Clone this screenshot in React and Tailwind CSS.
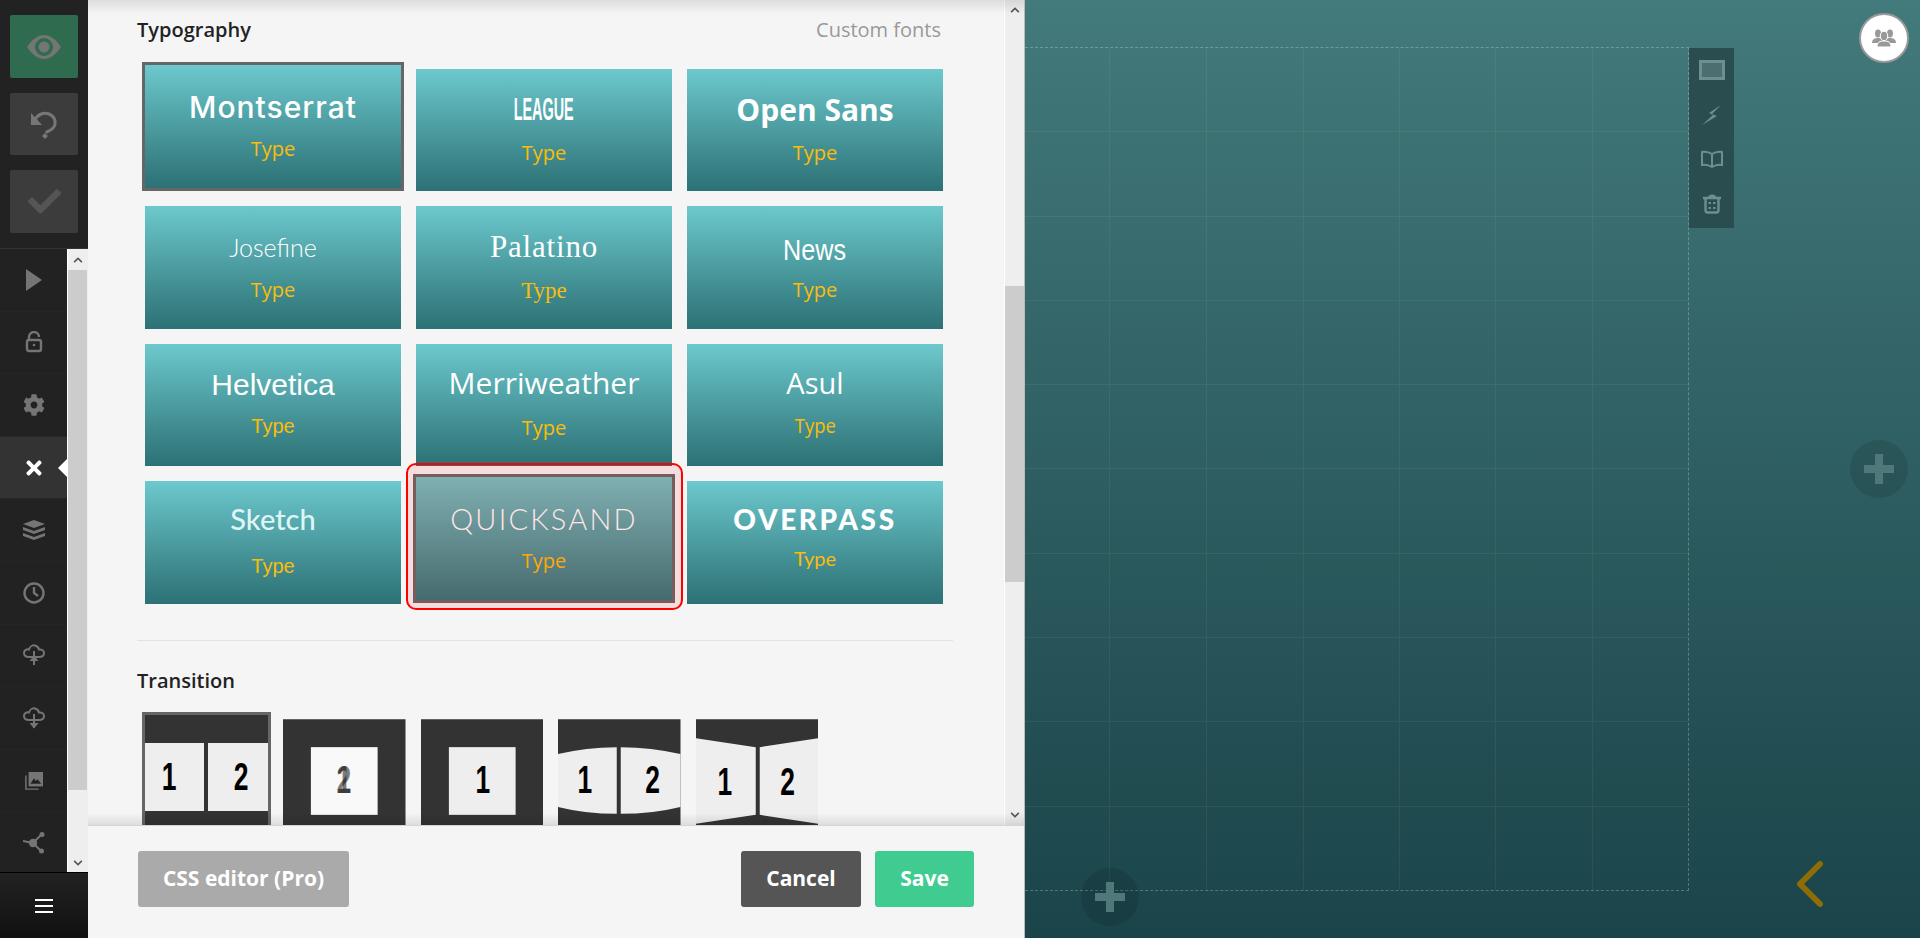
import React from "react";
import { FaCheck, FaCog, FaTimes, FaChevronUp, FaChevronDown } from "react-icons/fa";

const cards = [
  { name: "Montserrat", selected: true, pt: "pt-[24px]", mt: "mt-[10px]", nameClass: "font-['Inter'] font-medium text-[30px] tracking-[1px]", typeClass: "font-['Open_Sans'] text-[20px]" },
  { name: "LEAGUE", pt: "pt-[22px]", mt: "mt-[12px]", nameClass: "font-['Liberation_Sans'] font-bold text-[32px] scale-x-[0.45]", typeClass: "font-['Open_Sans'] text-[20px]" },
  { name: "Open Sans", pt: "pt-[23px]", mt: "mt-[11px]", nameClass: "font-['Open_Sans'] font-bold text-[30px]", typeClass: "font-['Open_Sans'] text-[20px]" },
  { name: "Josefine", pt: "pt-[23px]", mt: "mt-[11px]", nameClass: "font-['Lato'] font-light text-[25px]", typeClass: "font-['Open_Sans'] text-[20px]" },
  { name: "Palatino", pt: "pt-[23px]", mt: "mt-[12px]", nameClass: "font-['Liberation_Serif'] text-[31px] tracking-[0.8px]", typeClass: "font-['Liberation_Serif'] text-[23px]" },
  { name: "News", pt: "pt-[26px]", mt: "mt-[8px]", nameClass: "font-['Liberation_Sans'] text-[30px] scale-x-[0.84]", typeClass: "font-['Open_Sans'] text-[20px]" },
  { name: "Helvetica", pt: "pt-[23px]", mt: "mt-[9px]", nameClass: "font-['Liberation_Sans'] text-[30px]", typeClass: "font-['Liberation_Sans'] text-[20px]" },
  { name: "Merriweather", pt: "pt-[21px]", mt: "mt-[13px]", nameClass: "font-['Open_Sans'] font-medium text-[30px]", typeClass: "font-['Open_Sans'] text-[20px]" },
  { name: "Asul", pt: "pt-[21px]", mt: "mt-[11px]", nameClass: "font-['Open_Sans'] text-[29px]", typeClass: "font-['Open_Sans'] text-[20px] scale-x-[0.92]" },
  { name: "Sketch", pt: "pt-[20px]", mt: "mt-[15px]", nameClass: "font-['Lato'] font-medium text-[29px] text-[#dff5f5]", typeClass: "font-['Liberation_Sans'] text-[20px]" },
  { name: "QUICKSAND", highlighted: true, selected: true, pt: "pt-[24px]", mt: "mt-[10px]", nameClass: "font-['Lato'] font-light text-[29px] tracking-[2.2px]", typeClass: "font-['Open_Sans'] text-[20px]" },
  { name: "OVERPASS", pt: "pt-[20px]", mt: "mt-[7px]", nameClass: "font-['Lato'] font-black text-[28px] tracking-[2.6px]", typeClass: "font-['Lato'] text-[20px]" },
];

function EyeIcon() {
  return (
    <svg width="34" height="24" viewBox="0 0 34 24">
      <path d="M0 12 C6 3 12 0 17 0 C22 0 28 3 34 12 C28 21 22 24 17 24 C12 24 6 21 0 12 Z" fill="#757575" />
      <circle cx="17" cy="12" r="9" fill="#2f6b4f" />
      <circle cx="17" cy="12" r="5.500" fill="#757575" />
    </svg>
  );
}

function PlayIcon() {
  return (
    <svg width="18" height="22" viewBox="0 0 18 22">
      <polygon points="1,0 17,11 1,22" fill="#757575" />
    </svg>
  );
}

function UndoIcon() {
  return (
    <svg width="30" height="30" viewBox="0 0 30 30" fill="none">
      <path d="M6 11 C9 5 15 3 20 5 C27 8 28 16 23 20 C21 22 18 22 17 24" stroke="#777" strokeWidth="3" />
      <polygon points="2,4 2,16 13,16" fill="#777" />
      <polygon points="16,24 19,27 16,30 13,27" fill="#777" />
    </svg>
  );
}

function LockIcon() {
  return (
    <svg width="18" height="22" viewBox="0 0 18 22" fill="none" stroke="#757575" strokeWidth="2.4">
      <path d="M4 9 V6 C4 -0.5 14 -0.5 14 6" />
      <rect x="2" y="9" width="14" height="11" rx="2" />
      <circle cx="9" cy="14" r="1.3" fill="#757575" stroke="none" />
    </svg>
  );
}

function LayersIcon() {
  return (
    <svg width="24" height="20" viewBox="0 0 24 20" fill="#757575">
      <polygon points="12,0 23,4 12,8 1,4" />
      <polygon points="1,7 12,11 23,7 23,10 12,14 1,10" />
      <polygon points="1,13 12,17 23,13 23,16 12,20 1,16" />
    </svg>
  );
}

function ClockIcon() {
  return (
    <svg width="22" height="22" viewBox="0 0 22 22" fill="none" stroke="#757575" strokeWidth="2.4">
      <circle cx="11" cy="11" r="9.5" />
      <path d="M11 5 V11 L15 14" />
    </svg>
  );
}

function CloudIcon({ down }) {
  return (
    <svg width="22" height="22" viewBox="0 0 22 22" fill="none" stroke="#757575" strokeWidth="2">
      <path d="M6 13 C2 13 1 11 1 9 C1 6 4 5 6 5.500 C7 2 10 1 12 1.500 C14 2 15.500 3 16 5.500 C19 5 21 7 21 9 C21 11 19.500 13 16 13 Z" />
      <path d="M11 7 V21" />
      {down ? <polygon points="6.500,16 15.500,16 11,21.500" fill="#757575" stroke="none" /> : <polygon points="6.500,17 15.500,17 11,11.500" fill="#757575" stroke="none" />}
    </svg>
  );
}

function ImagesIcon() {
  return (
    <svg width="18" height="18" viewBox="0 0 20 20" fill="none">
      <path d="M1 4 V19 H15" stroke="#757575" strokeWidth="1.600" />
      <rect x="4" y="0" width="16" height="16" fill="#757575" />
      <polygon points="6,13 10,7 12,10 14,8 18,13" fill="#222" />
    </svg>
  );
}

function ShareIcon() {
  return (
    <svg width="22" height="22" viewBox="0 0 22 22" fill="#757575">
      <path d="M0 9 L10 11 M10 11 L19 2 M10 11 L18 19" stroke="#757575" strokeWidth="2" />
      <circle cx="10" cy="11" r="4.200" />
      <circle cx="19" cy="2.500" r="2.500" />
      <circle cx="18.500" cy="19" r="2.500" />
    </svg>
  );
}

function UsersIcon() {
  return (
    <svg width="24" height="18" viewBox="0 0 24 18" fill="#999">
      <ellipse cx="6" cy="4.500" rx="3" ry="4" />
      <ellipse cx="18" cy="4.500" rx="3" ry="4" />
      <path d="M0 14 C0 10 3 9 6 9 C9 9 12 10 12 14 Z" />
      <path d="M12 14 C12 10 15 9 18 9 C21 9 24 10 24 14 Z" />
      <ellipse cx="12" cy="7" rx="3.700" ry="4.800" stroke="#fff" strokeWidth="1" />
      <path d="M5 18 C5 13 8 12 12 12 C16 12 19 13 19 18 Z" stroke="#fff" strokeWidth="1" />
    </svg>
  );
}

function Sidebar() {
  const items = [<PlayIcon />, <LockIcon />, <FaCog className="text-[22px] text-[#757575]" />, <FaTimes className="text-[22px] text-white" />, <LayersIcon />, <ClockIcon />, <CloudIcon />, <CloudIcon down />, <ImagesIcon />, <ShareIcon />];
  return (
    <div className="w-[88px] flex flex-col bg-[#222]">
      {/* Top actions */}
      <div className="h-[249px] border-b border-[#333] px-[10px] pt-[15px] flex flex-col gap-[15px]">
        <div className="h-[63px] bg-[#2f6b4f] rounded-[2px] flex items-center justify-center">
          <EyeIcon />
        </div>
        <div className="h-[62px] bg-[#3c3c3c] rounded-[2px] flex items-center justify-center">
          <UndoIcon />
        </div>
        <div className="h-[63px] bg-[#3c3c3c] rounded-[2px] flex items-center justify-center">
          <FaCheck className="text-[33px] text-[#555]" />
        </div>
      </div>

      {/* Nav + scrollbar */}
      <div className="flex-1 flex min-h-0">
        <div className="w-[67px] flex flex-col overflow-hidden">
          {items.map((icon, i) => (
            <div key={i} className={`relative h-[62.6px] shrink-0 flex items-center justify-center border-b border-[#262626] ${i === 3 ? "bg-[#333]" : ""}`}>
              {icon}
              {i === 3 && <div className="absolute right-0 top-1/2 -translate-y-1/2 border-y-[9px] border-y-transparent border-r-[9px] border-r-white" />}
            </div>
          ))}
        </div>
        <div className="w-[21px] border-l border-white bg-[#eee] pr-px flex flex-col">
          <div className="h-[21px] flex items-center justify-center text-[#555] text-[10px]"><FaChevronUp /></div>
          <div className="h-[520px] bg-[#ccc]" />
          <div className="flex-1 flex items-end justify-center pb-[4px] text-[#555] text-[10px]"><FaChevronDown /></div>
        </div>
      </div>

      {/* Menu */}
      <div className="h-[66px] border-t border-black bg-gradient-to-b from-[#222] to-[#111] flex flex-col items-center justify-center gap-[4px]">
        <div className="w-[18px] h-[2px] bg-white" />
        <div className="w-[18px] h-[2px] bg-white" />
        <div className="w-[18px] h-[2px] bg-white" />
      </div>
    </div>
  );
}

function FontCard({ card }) {
  return (
    <div className={`relative ${card.selected ? "-mt-[7px] -mx-[3px] border-3 border-[#666]" : ""} ${card.highlighted ? "mb-[1px]" : ""}`}>
      <div className={`h-full flex flex-col items-center text-white ${card.pt} bg-gradient-to-b ${card.highlighted ? "from-[#71c4c7] to-[#31777a]" : "from-[#6cc9cd] to-[#2c7175]"}`}>
        <div className={`leading-[36px] whitespace-nowrap ${card.nameClass}`}>{card.name}</div>
        <div className={`${card.mt} leading-[28px] text-[#fbbc0a] ${card.typeClass}`}>Type</div>
      </div>
    </div>
  );
}

function Digit({ x, y, children, className = "" }) {
  return (
    <text transform={`translate(${x} ${y}) scale(0.68 1)`} textAnchor="middle" className={`font-['Liberation_Sans'] font-bold text-[39px] ${className}`}>
      {children}
    </text>
  );
}

function Thumb({ children, selected }) {
  return (
    <div className={`shrink-0 ${selected ? "w-[129px] -mt-[7px] -mx-[3px] border-3 border-[#666]" : "w-[122.5px]"} h-[129px]`}>
      <svg viewBox="0 0 123 123" className="w-full h-[123px] block">
        <rect width="123" height="123" fill="#333" />
        {children}
      </svg>
    </div>
  );
}

function Panel() {
  return (
    <div className="w-[937px] flex flex-col bg-[#f5f5f5] border-r border-[#bbb] relative">
      <div className="h-[826px] flex border-b border-[#d4d4d4] relative">
        <div className="flex-1 overflow-hidden pl-[49px] pt-[16px]">
          <div className="w-[804px] flex justify-between text-[20px] leading-[28px] font-['Open_Sans']">
            <span className="font-semibold text-[#222]">Typography</span>
            <span className="text-[#999]">Custom fonts</span>
          </div>
          <div className="w-[798px] ml-[8px] mt-[25px] grid grid-cols-3 gap-x-[15px] gap-y-[15px] grid-rows-[122px_123px_122px_123px]">
            {cards.map((card) => (
              <FontCard key={card.name} card={card} />
            ))}
          </div>
          <div className="w-[816px] mt-[36px] border-t border-[#e2e2e2]" />
          <div className="mt-[26px] text-[20px] leading-[28px] font-semibold text-[#222] font-['Open_Sans']">Transition</div>
          <div className="ml-[8px] mt-[24px] flex gap-[15px]">
            <Thumb selected>
              <rect x="0" y="28" width="59" height="68" fill="#eee" />
              <rect x="63" y="28" width="60" height="68" fill="#eee" />
              <Digit x="24" y="75">1</Digit>
              <Digit x="96" y="75">2</Digit>
            </Thumb>
            <Thumb>
              <rect x="28" y="28" width="67" height="68" fill="#f9f9f9" />
              <Digit x="61" y="74" className="opacity-50">1</Digit>
              <Digit x="61" y="74" className="opacity-50">2</Digit>
            </Thumb>
            <Thumb>
              <rect x="28" y="28" width="67" height="68" fill="#eee" />
              <Digit x="62" y="74">1</Digit>
            </Thumb>
            <Thumb>
              <path d="M0 35 Q28 28 59 28 V95 Q28 95 0 88 Z" fill="#eee" />
              <path d="M63 28 Q94 28 123 35 V88 Q94 95 63 95 Z" fill="#eee" />
              <Digit x="27" y="74">1</Digit>
              <Digit x="95" y="74">2</Digit>
            </Thumb>
            <Thumb>
              <polygon points="0,19 60,28 60,96 0,105" fill="#eee" />
              <polygon points="64,28 123,19 123,105 64,96" fill="#eee" />
              <Digit x="29" y="76">1</Digit>
              <Digit x="92" y="76">2</Digit>
            </Thumb>
          </div>
        </div>

        {/* Panel scrollbar */}
        <div className="w-[20px] border-l border-white bg-[#eee] flex flex-col text-[#555] text-[10px]">
          <div className="h-[20px] flex items-center justify-center"><FaChevronUp /></div>
          <div className="mt-[266px] h-[296px] bg-[#ccc]" />
          <div className="flex-1 flex items-end justify-center pb-[5px]"><FaChevronDown /></div>
        </div>

        {/* Scroll shadows */}
        <div className="absolute inset-x-0 top-0 h-[14px] bg-gradient-to-b from-black/10 to-transparent" />
        <div className="absolute inset-x-0 bottom-0 h-[12px] bg-gradient-to-b from-transparent to-black/10" />
      </div>

      {/* Footer */}
      <div className="flex-1 flex items-start justify-between pl-[50px] pr-[50px] pt-[25px] text-[21px] font-bold text-white font-['Open_Sans']">
        <button className="w-[211px] h-[56px] bg-[#aaa] rounded-[3px]">CSS editor (Pro)</button>
        <div className="flex gap-[14px]">
          <button className="w-[120px] h-[56px] bg-[#555] rounded-[3px]">Cancel</button>
          <button className="w-[99px] h-[56px] bg-[#40cc91] rounded-[3px]">Save</button>
        </div>
      </div>
    </div>
  );
}

function Canvas() {
  const colClasses = ["w-[85px]", "w-[97px]", "w-[97px]", "w-[97px]", "w-[96px]", "w-[97px]", "w-[95px]"];
  const rows = Array.from({ length: 10 });
  return (
    <div className="relative flex-1 bg-gradient-to-b from-[#437a7b] to-[#1a4449] pt-[47px]">
      {/* Grid */}
      <div className="w-[664px] h-[844px] border-y border-r border-dashed border-white/25 flex flex-col">
        {rows.map((_, r) => (
          <div key={r} className={`flex-1 flex ${r < 9 ? "border-b border-white/6" : ""}`}>
            {colClasses.map((w, c) => (
              <div key={c} className={`${w} ${c < 6 ? "border-r border-white/6" : ""}`} />
            ))}
          </div>
        ))}
      </div>

      {/* Tools */}
      <div className="absolute left-[664px] top-[48px] w-[45px] h-[180px] bg-[#2a4e50] flex flex-col items-center">
        <div className="h-[44.500px] flex items-center">
          <svg width="26" height="20" viewBox="0 0 26 20">
            <rect x="1.500" y="1.500" width="23" height="17" fill="#4d6e71" stroke="#6f8e90" strokeWidth="3" />
          </svg>
        </div>
        <div className="h-[44.500px] flex items-center">
          <svg width="20" height="20" viewBox="0 0 20 20">
            <polygon points="19,0 7,8 11,10 0,20 15,11 10,9" fill="#6f8e90" />
          </svg>
        </div>
        <div className="h-[44.500px] flex items-center">
          <svg width="22" height="18" viewBox="0 0 22 18" fill="none" stroke="#6f8e90" strokeWidth="2">
            <path d="M11 4 C8 2 5 1 1 2 V15 C5 14 8 15 11 17 C14 15 17 14 21 15 V2 C17 1 14 2 11 4 Z M11 4 V17" />
          </svg>
        </div>
        <div className="h-[44.500px] flex items-center">
          <svg width="20" height="20" viewBox="0 0 20 20" fill="none" stroke="#6f8e90" strokeWidth="2.400">
            <path d="M1 4 H19 M7 4 C7 1 13 1 13 4 M3.500 4 V16 C3.500 18.500 5 18.500 5.500 18.500 H14.500 C15 18.500 16.500 18.500 16.500 16 V4" />
            <path d="M6.500 9 H9 M11 9 H13.500 M6.500 14 H9 M11 14 H13.500" strokeWidth="2" />
          </svg>
        </div>
      </div>

      {/* User */}
      <div className="absolute left-[834px] top-[13px] w-[50px] h-[50px] rounded-full bg-white border-2 border-[#999] flex items-center justify-center">
        <UsersIcon />
      </div>

      {/* Add buttons */}
      <div className="absolute left-[825px] top-[440px] w-[58px] h-[58px] rounded-full bg-black/10 flex items-center justify-center">
        <PlusMark />
      </div>
      <div className="absolute left-[56px] top-[868px] w-[58px] h-[58px] rounded-full bg-black/10 flex items-center justify-center">
        <PlusMark />
      </div>

      {/* Back */}
      <svg className="absolute left-[771px] top-[861px]" width="28" height="46" viewBox="0 0 28 46" fill="none">
        <path d="M24 3 L4 23 L24 43" stroke="#8f6d05" strokeWidth="6" strokeLinecap="round" strokeLinejoin="round" />
      </svg>
    </div>
  );
}

function PlusMark() {
  return (
    <svg width="30" height="30" viewBox="0 0 30 30">
      <path d="M11 0 H19 V11 H30 V19 H19 V30 H11 V19 H0 V11 H11 Z" fill="#4e787a" />
    </svg>
  );
}

export default function App() {
  return (
    <div className="relative w-[1920px] h-[938px] overflow-hidden flex">
      <Sidebar />
      <Panel />
      <Canvas />
      {/* Highlight */}
      <div className="absolute left-[406px] top-[463px] w-[277px] h-[147px] rounded-[10px] border-2 border-[#f00] bg-[#f00]/10 pointer-events-none" />
    </div>
  );
}
